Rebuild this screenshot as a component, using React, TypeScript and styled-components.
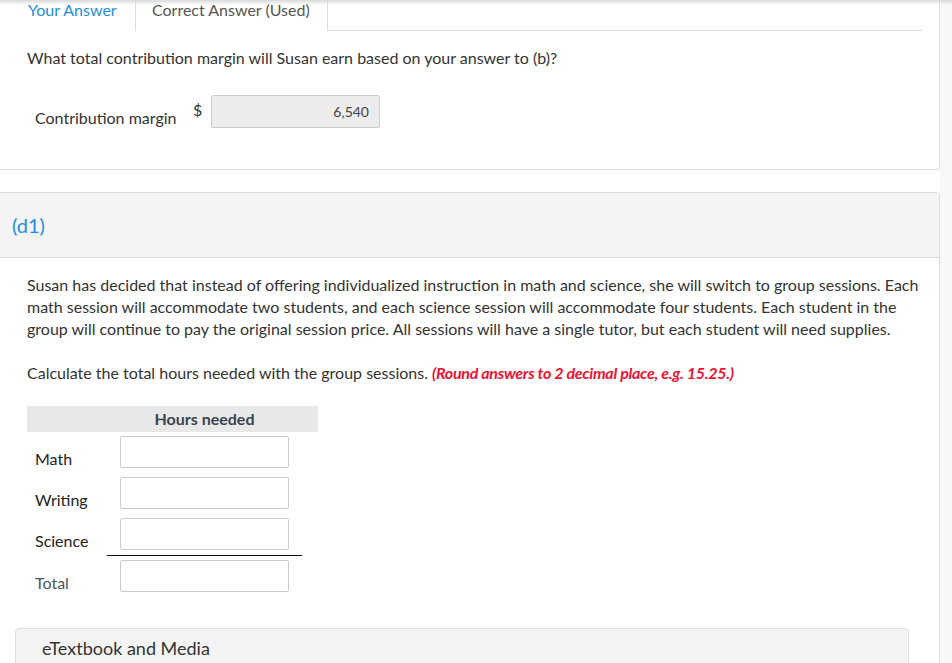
import React from 'react';
import { createGlobalStyle, styled } from 'styled-components';

const GlobalStyle = createGlobalStyle`
  html, body {
    margin: 0;
    padding: 0;
    background: #ffffff;
  }
  body {
    font-family: Lato, "Open Sans", "Liberation Sans", sans-serif;
    color: #333333;
    overflow: hidden;
  }
  * {
    box-sizing: border-box;
  }
`;

const Page = styled.div`
  position: relative;
  display: flex;
  width: 952px;
  height: 663px;
  overflow: hidden;
`;

const TopShadow = styled.div`
  position: absolute;
  left: 0;
  top: 0;
  width: 100%;
  height: 5px;
  background: linear-gradient(#d9d9d9, rgba(255, 255, 255, 0));
  pointer-events: none;
`;

const Main = styled.div`
  width: 940px;
  display: flex;
  flex-direction: column;
`;

const Gutter = styled.div`
  flex: 1;
  background: #f8f8f8;
`;

const AnswerCard = styled.div`
  flex-shrink: 0;
  height: 170px;
  border-right: 1px solid #dcdcdc;
  border-bottom: 1px solid #dcdcdc;
  border-bottom-right-radius: 4px;
  background: #ffffff;
`;

const TabBar = styled.div`
  display: flex;
  margin: 0 17px 0 12px;
  height: 31px;
  border-bottom: 1px solid #dddddd;
`;

const Tab = styled.div<{ $active?: boolean }>`
  height: 31px;
  padding: 0 16px;
  font-size: 16px;
  line-height: 20px;
  white-space: nowrap;
  color: ${({ $active }) => ($active ? '#555555' : '#1e8fdc')};
  background: #ffffff;
  border-left: ${({ $active }) => ($active ? '1px solid #dddddd' : 'none')};
  border-right: ${({ $active }) => ($active ? '1px solid #dddddd' : 'none')};
  margin-bottom: ${({ $active }) => ($active ? '-1px' : '0')};
  width: ${({ $active }) => ($active ? '193px' : '123px')};
`;

const Question = styled.p`
  margin: 17px 0 0 27px;
  font-size: 16px;
  line-height: 20px;
  color: #333333;
`;

const MarginRow = styled.div`
  display: flex;
  align-items: flex-start;
  margin: 27px 0 0 35px;
`;

const MarginLabel = styled.div`
  font-size: 16px;
  line-height: 20px;
  margin-top: 13px;
  width: 158px;
  color: #333333;
`;

const Dollar = styled.div`
  font-size: 16px;
  line-height: 20px;
  margin-top: 5px;
  width: 18px;
  color: #333333;
`;

const FilledBox = styled.div`
  width: 169px;
  height: 33px;
  border: 1px solid #cccccc;
  border-radius: 2px;
  background: #ececec;
  font-size: 14px;
  line-height: 31px;
  text-align: right;
  padding-right: 10px;
  color: #444444;
`;

const PartCard = styled.div`
  flex: 1;
  margin-top: 22px;
  border-top: 1px solid #dcdcdc;
  border-right: 1px solid #dcdcdc;
  border-top-right-radius: 4px;
  background: #ffffff;
  display: flex;
  flex-direction: column;
`;

const PartHeader = styled.div`
  flex-shrink: 0;
  height: 65px;
  background: #f4f4f4;
  border-bottom: 1px solid #dcdcdc;
  display: flex;
  align-items: center;
  padding-left: 12px;
  font-size: 20px;
  color: #1e8fdc;
`;

const PartBody = styled.div`
  padding: 16px 0 0 0;
`;

const Paragraph = styled.p`
  margin: 0 0 0 27px;
  width: 903px;
  font-size: 16px;
  line-height: 22px;
  color: #333333;
`;

const Instruction = styled.p`
  margin: 22px 0 0 27px;
  font-size: 16px;
  line-height: 22px;
  color: #333333;
`;

const Hint = styled.span`
  color: #ee1133;
  font-weight: 700;
  font-style: italic;
  letter-spacing: -0.28px;
`;

const Table = styled.div`
  margin: 22px 0 0 27px;
  width: 291px;
  display: grid;
  grid-template-columns: 80px 195px 16px;
`;

const HeaderCell = styled.div`
  height: 26px;
  background: #e8e8e8;
  font-size: 16px;
  font-weight: 700;
  line-height: 26px;
  text-align: center;
  color: #3a4550;
`;

const LabelCell = styled.div<{ $muted?: boolean }>`
  height: 41px;
  padding: 0 0 4px 8px;
  display: flex;
  align-items: flex-end;
  font-size: 16px;
  line-height: 20px;
  color: ${({ $muted }) => ($muted ? '#4d5660' : '#222222')};
`;

const InputCell = styled.div<{ $rule?: boolean }>`
  height: ${({ $rule }) => ($rule ? '42px' : '41px')};
  padding: 4px 13px 5px;
  border-bottom: ${({ $rule }) => ($rule ? '1px solid #111111' : 'none')};
`;

const EmptyCell = styled.div``;

const AnswerInput = styled.input`
  display: block;
  width: 169px;
  height: 32px;
  border: 1px solid #cccccc;
  border-radius: 2px;
  background: #ffffff;
  font-family: inherit;
  font-size: 14px;
  padding: 0 8px;
  outline: none;
`;

const MediaBox = styled.div`
  margin: 31px 0 0 15px;
  width: 894px;
  height: 60px;
  background: #f4f4f4;
  border: 1px solid #dddddd;
  border-radius: 4px 4px 0 0;
  padding: 8px 0 0 26px;
  font-size: 18px;
  line-height: 22px;
  color: #333333;
`;

const rows = [
  { label: 'Math' },
  { label: 'Writing' },
  { label: 'Science', rule: true },
  { label: 'Total', muted: true },
];

const App = () => {
  return (
    <>
      <GlobalStyle />
      <Page>
        <Main>
          <AnswerCard>
            <TabBar>
              <Tab>Your Answer</Tab>
              <Tab $active>Correct Answer (Used)</Tab>
            </TabBar>
            <Question>
              What total contribution margin will Susan earn based on your answer to (b)?
            </Question>
            <MarginRow>
              <MarginLabel>Contribution margin</MarginLabel>
              <Dollar>$</Dollar>
              <FilledBox>6,540</FilledBox>
            </MarginRow>
          </AnswerCard>
          <PartCard>
            <PartHeader>(d1)</PartHeader>
            <PartBody>
              <Paragraph>
                Susan has decided that instead of offering individualized instruction in math and
                science, she will switch to group sessions. Each math session will accommodate two
                students, and each science session will accommodate four students. Each student in
                the group will continue to pay the original session price. All sessions will have a
                single tutor, but each student will need supplies.
              </Paragraph>
              <Instruction>
                Calculate the total hours needed with the group sessions.{' '}
                <Hint>(Round answers to 2 decimal place, e.g. 15.25.)</Hint>
              </Instruction>
              <Table>
                <HeaderCell />
                <HeaderCell>Hours needed</HeaderCell>
                <HeaderCell />
                {rows.map((row) => (
                  <React.Fragment key={row.label}>
                    <LabelCell $muted={row.muted}>{row.label}</LabelCell>
                    <InputCell $rule={row.rule}>
                      <AnswerInput type="text" />
                    </InputCell>
                    <EmptyCell />
                  </React.Fragment>
                ))}
              </Table>
              <MediaBox>eTextbook and Media</MediaBox>
            </PartBody>
          </PartCard>
        </Main>
        <Gutter />
        <TopShadow />
      </Page>
    </>
  );
};

export default App;
